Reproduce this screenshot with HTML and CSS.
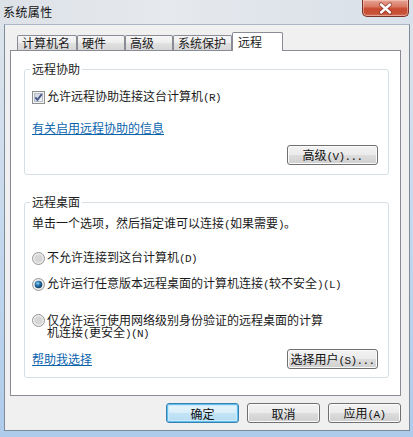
FILE: index.html
```html
<!DOCTYPE html>
<html lang="zh-CN">
  <head>
    <meta charset="UTF-8" />
    <title>系统属性</title>
    <link rel="stylesheet" href="styles.css">
  </head>
  <body>
    <div class="window">
      <div class="titlebar">
        <span class="title">系统属性</span>
        <span class="close">
          <svg width="47" height="17" viewBox="0 0 47 17">
            <path d="M20 4.5 L29 12.5 M29 4.5 L20 12.5" stroke="#6b2418" stroke-width="4.2" stroke-linecap="round" opacity="0.6" />
            <path d="M20 4.5 L29 12.5 M29 4.5 L20 12.5" stroke="#ffffff" stroke-width="2.4" stroke-linecap="round" />
          </svg>
        </span>
      </div>

      <div class="client">
        <div class="tabs">
          <div class="tab tab-1">计算机名</div>
          <div class="tab tab-2">硬件</div>
          <div class="tab tab-3">高级</div>
          <div class="tab tab-4">系统保护</div>
          <div class="tab tab-5 active">远程</div>
        </div>

        <div class="panel">
          <fieldset class="group group-assist">
            <legend>远程协助</legend>
            <div class="option">
              <svg class="box" width="13" height="13" viewBox="0 0 13 13">
                <defs>
                  <linearGradient id="boxfill" x1="0" y1="0" x2="1" y2="1">
                    <stop offset="0" stop-color="#cbd3de" />
                    <stop offset="1" stop-color="#f4f6f9" />
                  </linearGradient>
                </defs>
                <rect x="0.5" y="0.5" width="12" height="12" fill="#f4f4f4" stroke="#8e8f8f" />
                <rect x="2.5" y="2.5" width="8" height="8" fill="url(#boxfill)" stroke="#b7bfca" />
                <path d="M3.3 6.4 L5.4 8.9 L9.8 3.2" fill="none" stroke="#4a5d8a" stroke-width="1.9" />
              </svg>
              <span>允许远程协助连接这台计算机<span class="en">(R)</span></span>
            </div>
            <a class="link link-info" href="#">有关启用远程协助的信息</a>
            <div class="row-end">
              <button class="btn btn-wide">高级<span class="en">(V)...</span></button>
            </div>
          </fieldset>

          <fieldset class="group group-desktop">
            <legend>远程桌面</legend>
            <div class="desc">单击一个选项，然后指定谁可以连接<span class="en">(</span>如果需要<span class="en">)</span>。</div>
            <div class="option radio-1">
              <svg class="box" width="13" height="13" viewBox="0 0 13 13">
                <circle cx="6.5" cy="6.5" r="6" fill="#ececec" stroke="#979797" />
                <circle cx="6.5" cy="6.5" r="4" fill="#d6d6d6" />
              </svg>
              <span>不允许连接到这台计算机<span class="en">(D)</span></span>
            </div>
            <div class="option radio-2">
              <svg class="box" width="13" height="13" viewBox="0 0 13 13">
                <defs>
                  <radialGradient id="dot" cx="0.4" cy="0.35" r="0.7">
                    <stop offset="0" stop-color="#8fd3f7" />
                    <stop offset="0.45" stop-color="#2673ab" />
                    <stop offset="1" stop-color="#0d3558" />
                  </radialGradient>
                </defs>
                <circle cx="6.5" cy="6.5" r="6" fill="#ececec" stroke="#979797" />
                <circle cx="6.5" cy="6.5" r="3.8" fill="url(#dot)" />
              </svg>
              <span>允许运行任意版本远程桌面的计算机连接<span class="en">(</span>较不安全<span class="en">)(L)</span></span>
            </div>
            <div class="option radio-3">
              <svg class="box" width="13" height="13" viewBox="0 0 13 13">
                <circle cx="6.5" cy="6.5" r="6" fill="#ececec" stroke="#979797" />
                <circle cx="6.5" cy="6.5" r="4" fill="#d6d6d6" />
              </svg>
              <span class="wrap">仅允许运行使用网络级别身份验证的远程桌面的计算机连接<span class="en">(</span>更安全<span class="en">)(N)</span></span>
            </div>
            <div class="row-split">
              <a class="link" href="#">帮助我选择</a>
              <button class="btn btn-wide">选择用户<span class="en">(S)...</span></button>
            </div>
          </fieldset>
        </div>

        <div class="footer">
          <button class="btn btn-default">确定</button>
          <button class="btn">取消</button>
          <button class="btn">应用<span class="en">(A)</span></button>
        </div>
      </div>
    </div>
  </body>
</html>
```

FILE: styles.css
```css
body {
  margin: 0;
  padding: 0;
  font-family: "Noto Sans CJK SC", "Noto Sans CJK TC", sans-serif;
  font-size: 12px;
  color: #1b1b1b;
}

.window {
  width: 413px;
  height: 437px;
  display: flex;
  flex-direction: column;
  background: linear-gradient(#dfe4ea 0%, #d7e1ec 20%, #c1d6ed 60%, #afcbeb 100%);
  overflow: hidden;
}

.titlebar {
  height: 24px;
  display: flex;
  justify-content: space-between;
  align-items: flex-start;
  padding: 0 4px 0 3px;
  box-sizing: border-box;
  background: linear-gradient(90deg, #dde2e8, #e6e9ed 40%, #dfe4ea 70%, #d8e1eb);
}

.title {
  margin-top: 5px;
  line-height: 13px;
  font-size: 12px;
  letter-spacing: 0.4px;
  color: #111;
}

.close {
  width: 47px;
  height: 17px;
  box-sizing: border-box;
  border: 1px solid #7a3226;
  border-top: none;
  border-radius: 0 0 5px 5px;
  background: linear-gradient(#e6a394 0%, #da7a66 40%, #c84a31 55%, #c9533a 85%, #d8765f 100%);
  box-shadow: inset 0 0 0 1px rgba(255, 220, 210, 0.45);
  display: flex;
  justify-content: center;
  align-items: center;
}

.close svg {
  display: block;
  margin-left: -2px;
}

.client {
  flex: 1;
  margin: 0 3px 6px 4px;
  background: #f0f0f0;
  border: 1px solid #7d8c9b;
  border-top-color: #a9b7c6;
  padding: 7px 8px 0 5px;
  box-sizing: border-box;
}

/* tab strip */
.tabs {
  display: flex;
  align-items: flex-end;
  height: 18px;
  margin-left: 7px;
}

.tab {
  box-sizing: border-box;
  height: 15px;
  border: 1px solid #898c95;
  border-bottom: none;
  border-radius: 2px 2px 0 0;
  padding-left: 4px;
  line-height: 13px;
  white-space: nowrap;
  background: linear-gradient(#f6f6f6 0%, #ededed 50%, #e1e1e1 51%, #d6d6d6 100%);
}

.tab-1 { width: 60px; }
.tab-2 { width: 48px; }
.tab-3 { width: 48px; }
.tab-4 { width: 59px; }
.tab-5 { width: 51px; }

.tab.active {
  height: 19px;
  margin-bottom: -1px;
  padding-top: 2px;
  padding-left: 5px;
  background: #fff;
  position: relative;
  z-index: 1;
}

.panel {
  height: 346px;
  box-sizing: border-box;
  background: #fff;
  border: 1px solid #898c95;
  padding: 12px 11px 0 13px;
}

/* group boxes */
.group {
  margin: 0;
  min-width: 0;
  border: 1px solid #d5dfe5;
  border-radius: 3px;
  padding: 15px 10px 9px 7px;
}

.group legend {
  padding: 0 2px;
  margin-left: -2px;
  line-height: 12px;
  font-size: 12px;
}

.group-desktop {
  margin-top: 21px;
  padding-top: 8px;
  padding-bottom: 8px;
}

.option {
  display: flex;
  align-items: center;
  height: 14px;
  line-height: 14px;
  white-space: nowrap;
}

.option .box {
  flex: none;
  margin-right: 2px;
  display: block;
}

.en {
  font-family: "Liberation Mono", "DejaVu Sans Mono", monospace;
  font-size: 11px;
  letter-spacing: -0.6px;
}

.link {
  display: block;
  color: #0c64ad;
  text-decoration: underline;
  line-height: 14px;
  height: 14px;
}

.link-info {
  margin-top: 17px;
}

.row-end {
  margin-top: 10px;
  display: flex;
  justify-content: flex-end;
}

.desc {
  line-height: 14px;
  height: 14px;
  white-space: nowrap;
}

.radio-1 {
  margin-top: 21px;
}

.radio-2 {
  margin-top: 12px;
}

.radio-3 {
  margin-top: 23px;
  height: 24px;
  align-items: flex-start;
  white-space: normal;
}

.radio-3 .box {
  margin-top: 0;
}

.radio-3 .wrap {
  width: 280px;
  line-height: 12px;
}

.row-split {
  margin-top: 11px;
  display: flex;
  justify-content: space-between;
  align-items: center;
}

/* push buttons */
.btn {
  width: 73px;
  height: 20px;
  padding: 0;
  margin: 0;
  box-sizing: border-box;
  border: 1px solid #707070;
  border-radius: 3px;
  background: linear-gradient(#f2f2f2 0%, #ebebeb 50%, #dddddd 51%, #cfcfcf 100%);
  box-shadow: inset 0 0 0 1px #fbfbfb;
  font-family: "Noto Sans CJK SC", sans-serif;
  font-size: 12px;
  line-height: 17px;
  color: #111;
  white-space: nowrap;
}

.btn-wide {
  width: 91px;
}

.btn-default {
  border-color: #3c7fb1;
  background: linear-gradient(#e9f5fc 0%, #d9eefa 50%, #c4e4f6 51%, #b5dcf2 100%);
  box-shadow: inset 0 0 0 1px #5fc0ee, inset 0 0 0 2px #c8eafb;
}

.footer {
  margin-top: 7px;
  display: flex;
  justify-content: flex-end;
  gap: 8px;
}
```
